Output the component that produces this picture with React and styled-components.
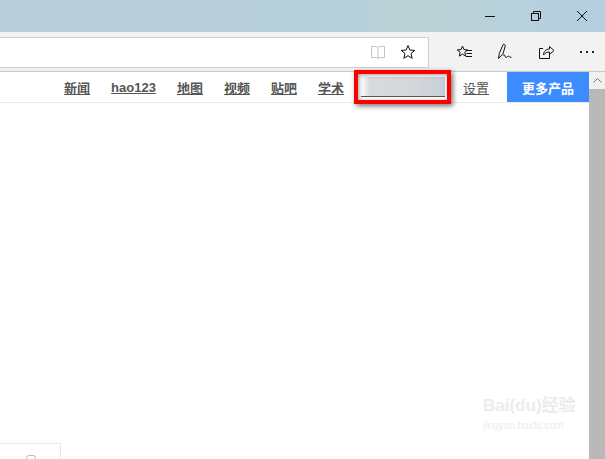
import React from 'react';
import styled, { createGlobalStyle } from 'styled-components';

const GlobalStyle = createGlobalStyle`
    html, body {
        margin: 0;
        padding: 0;
        background: #fff;
    }
    body {
        font-family: "Liberation Sans", "Noto Sans CJK SC", sans-serif;
    }
`;

const Page = styled.div`
    position: relative;
    width: 605px;
    height: 459px;
    overflow: hidden;
    display: flex;
    flex-direction: column;
`;

const TitleBar = styled.div`
    height: 32px;
    flex: none;
    display: flex;
    justify-content: flex-end;
    background: linear-gradient(90deg, #b9d0dc 0%, #b8d0dc 60%, #bcd2d4 68%, #b9d1da 80%, #b5cfe0 100%);
`;

const WinButton = styled.div`
    width: 46px;
    height: 32px;
    display: flex;
    align-items: center;
    justify-content: center;
`;

const ToolBar = styled.div`
    height: 40px;
    flex: none;
    box-sizing: border-box;
    display: flex;
    align-items: center;
    background: #f2f2f2;
    border-bottom: 1px solid #c9c9c9;
`;

const AddressBar = styled.div`
    width: 429px;
    height: 31px;
    box-sizing: border-box;
    margin-top: 1px;
    flex: none;
    display: flex;
    align-items: center;
    justify-content: flex-end;
    gap: 14px;
    padding-right: 12px;
    background: #fff;
    border: 1px solid #cfcfcf;
    border-left: none;
`;

const ToolIcons = styled.div`
    flex: 1;
    display: flex;
    align-items: center;
    justify-content: space-between;
    padding: 0 10px 0 27px;
`;

const Body = styled.div`
    flex: 1;
    display: flex;
    min-height: 0;
`;

const Main = styled.div`
    flex: 1;
    display: flex;
    flex-direction: column;
    min-width: 0;
`;

const Nav = styled.div`
    height: 31px;
    flex: none;
    box-sizing: border-box;
    display: flex;
    align-items: center;
    justify-content: flex-end;
    border-bottom: 1px solid #ebebeb;
`;

const NavLink = styled.a`
    font-size: 13px;
    font-weight: ${({ $plain }) => ($plain ? 400 : 700)};
    color: #555;
    text-decoration: underline;
    margin-right: ${({ $gap }) => $gap}px;
`;

const Blurred = styled.div`
    width: 84px;
    height: 19px;
    margin-right: 18px;
    border-bottom: 1px solid #555;
    background: linear-gradient(90deg, #fff 0%, #d9dadb 10%, #d4d7da 65%, #c6ced9 100%);
`;

const MoreButton = styled.div`
    width: 82px;
    height: 30px;
    display: flex;
    align-items: center;
    justify-content: center;
    background: #3c8cff;
    color: #fff;
    font-size: 13px;
    font-weight: 700;
`;

const Content = styled.div`
    flex: 1;
    position: relative;
`;

const Card = styled.div`
    position: absolute;
    left: 0;
    bottom: -1px;
    width: 61px;
    height: 17px;
    box-sizing: border-box;
    border-top: 1px solid #e8e8e8;
    border-right: 1px solid #e8e8e8;
`;

const CardIcon = styled.div`
    position: absolute;
    left: 26px;
    top: 11px;
    width: 10px;
    height: 10px;
    box-sizing: border-box;
    border: 1px solid #bbb;
    border-radius: 3px;
`;

const ScrollBar = styled.div`
    width: 16px;
    flex: none;
    display: flex;
    flex-direction: column;
    background: #b9b9b9;
`;

const ScrollUp = styled.div`
    height: 17px;
    display: flex;
    align-items: center;
    justify-content: center;
    background: #f0f0f0;
`;

const Highlight = styled.div`
    position: absolute;
    left: 354px;
    top: 70px;
    width: 97px;
    height: 34px;
    box-sizing: border-box;
    border: 4px solid #fc0000;
    box-shadow: 2px 2px 5px rgba(0, 0, 0, 0.55), inset 1px 1px 4px rgba(0, 0, 0, 0.4);
`;

const Watermark = styled.div`
    position: absolute;
    left: 483px;
    top: 395px;
    width: 100px;
    color: #ececec;
    pointer-events: none;
`;

const MarkRow = styled.div`
    display: flex;
    align-items: center;
    font-size: 17px;
    font-weight: 700;
    line-height: 22px;
    white-space: nowrap;
`;

const MarkUrl = styled.div`
    font-size: 10px;
    line-height: 12px;
    margin-top: 3px;
    white-space: nowrap;
`;

const Minimize = () => (
    <svg width="12" height="12" viewBox="0 0 12 12"><path d="M1 6.5h10" stroke="#111" fill="none" /></svg>
);

const Restore = () => (
    <svg width="12" height="12" viewBox="0 0 12 12" fill="none" stroke="#111">
        <rect x="1.5" y="3.5" width="7" height="7" />
        <path d="M3.5 3.5v-2h7v7h-2" />
    </svg>
);

const Close = () => (
    <svg width="12" height="12" viewBox="0 0 12 12"><path d="M1 1l10 10M11 1L1 11" stroke="#111" fill="none" /></svg>
);

const Book = () => (
    <svg width="16" height="16" viewBox="0 0 16 16" fill="none" stroke="#c4c4c4">
        <path d="M1.5 2.5h5l1.5 1 1.5-1h5v11h-5l-1.5 1-1.5-1h-5z" />
        <path d="M8 3.5v11" />
    </svg>
);

const Star = () => (
    <svg width="16" height="16" viewBox="0 0 16 16" fill="none" stroke="#111">
        <path d="M8 1.5l1.9 4.6 4.9.3-3.8 3.1 1.2 4.8L8 11.7l-4.2 2.6L5 9.5 1.2 6.4l4.9-.3z" />
    </svg>
);

const Favorites = () => (
    <svg width="17" height="16" viewBox="0 0 17 16" fill="none" stroke="#111">
        <path d="M6.5 2l1.5 3.6 3.7.3-2.9 2.4.9 3.8-3.2-2-3.2 2 .9-3.8L1.3 5.9 5 5.6z" />
        <path d="M10.5 6.5H16M10.5 9.5H16M10 12.5h6" />
    </svg>
);

const Pen = () => (
    <svg width="16" height="17" viewBox="0 0 16 17" fill="none" stroke="#111">
        <path d="M1.5 15.5l.8-5L6 1.8c.6-1 2.6-.3 2.3 1L6 10.8l-4.5 4.7z" />
        <path d="M6 12.5c1-1 1.500-1 2 .5s1 2 2 1 1.500-1 2.500-.2l2 .7" />
    </svg>
);

const Share = () => (
    <svg width="17" height="16" viewBox="0 0 17 16" fill="none" stroke="#111">
        <path d="M1.500 4.500h3.500M1.500 4.500v10h10v-5" />
        <path d="M5.500 11c0-3.500 2.500-6 6-6V2.500l4.500 4-4.500 4V8c-2.500 0-4.500 1-6 3z" />
    </svg>
);

const More = () => (
    <svg width="16" height="4" viewBox="0 0 16 4" fill="#222">
        <rect x="1" y="1" width="2" height="2" />
        <rect x="7" y="1" width="2" height="2" />
        <rect x="13" y="1" width="2" height="2" />
    </svg>
);

const Chevron = () => (
    <svg width="9" height="5" viewBox="0 0 9 5"><path d="M.5 4.500l4-4 4 4" stroke="#777" fill="none" /></svg>
);

const links = [
    { text: '新闻', gap: 21 },
    { text: 'hao123', gap: 21 },
    { text: '地图', gap: 21 },
    { text: '视频', gap: 21 },
    { text: '贴吧', gap: 21 },
    { text: '学术', gap: 17 }
];

const App = () => (
    <Page>
        <GlobalStyle />
        <TitleBar>
            <WinButton><Minimize /></WinButton>
            <WinButton><Restore /></WinButton>
            <WinButton><Close /></WinButton>
        </TitleBar>
        <ToolBar>
            <AddressBar>
                <Book />
                <Star />
            </AddressBar>
            <ToolIcons>
                <Favorites />
                <Pen />
                <Share />
                <More />
            </ToolIcons>
        </ToolBar>
        <Body>
            <Main>
                <Nav>
                    {links.map(({ text, gap }) => (
                        <NavLink key={text} $gap={gap}>{text}</NavLink>
                    ))}
                    <Blurred />
                    <NavLink $plain $gap={18}>设置</NavLink>
                    <MoreButton>更多产品</MoreButton>
                </Nav>
                <Content>
                    <Card><CardIcon /></Card>
                </Content>
            </Main>
            <ScrollBar>
                <ScrollUp><Chevron /></ScrollUp>
            </ScrollBar>
        </Body>
        <Highlight />
        <Watermark>
            <MarkRow>Bai(du)经验</MarkRow>
            <MarkUrl>jingyan.baidu.com</MarkUrl>
        </Watermark>
    </Page>
);

export default App;
